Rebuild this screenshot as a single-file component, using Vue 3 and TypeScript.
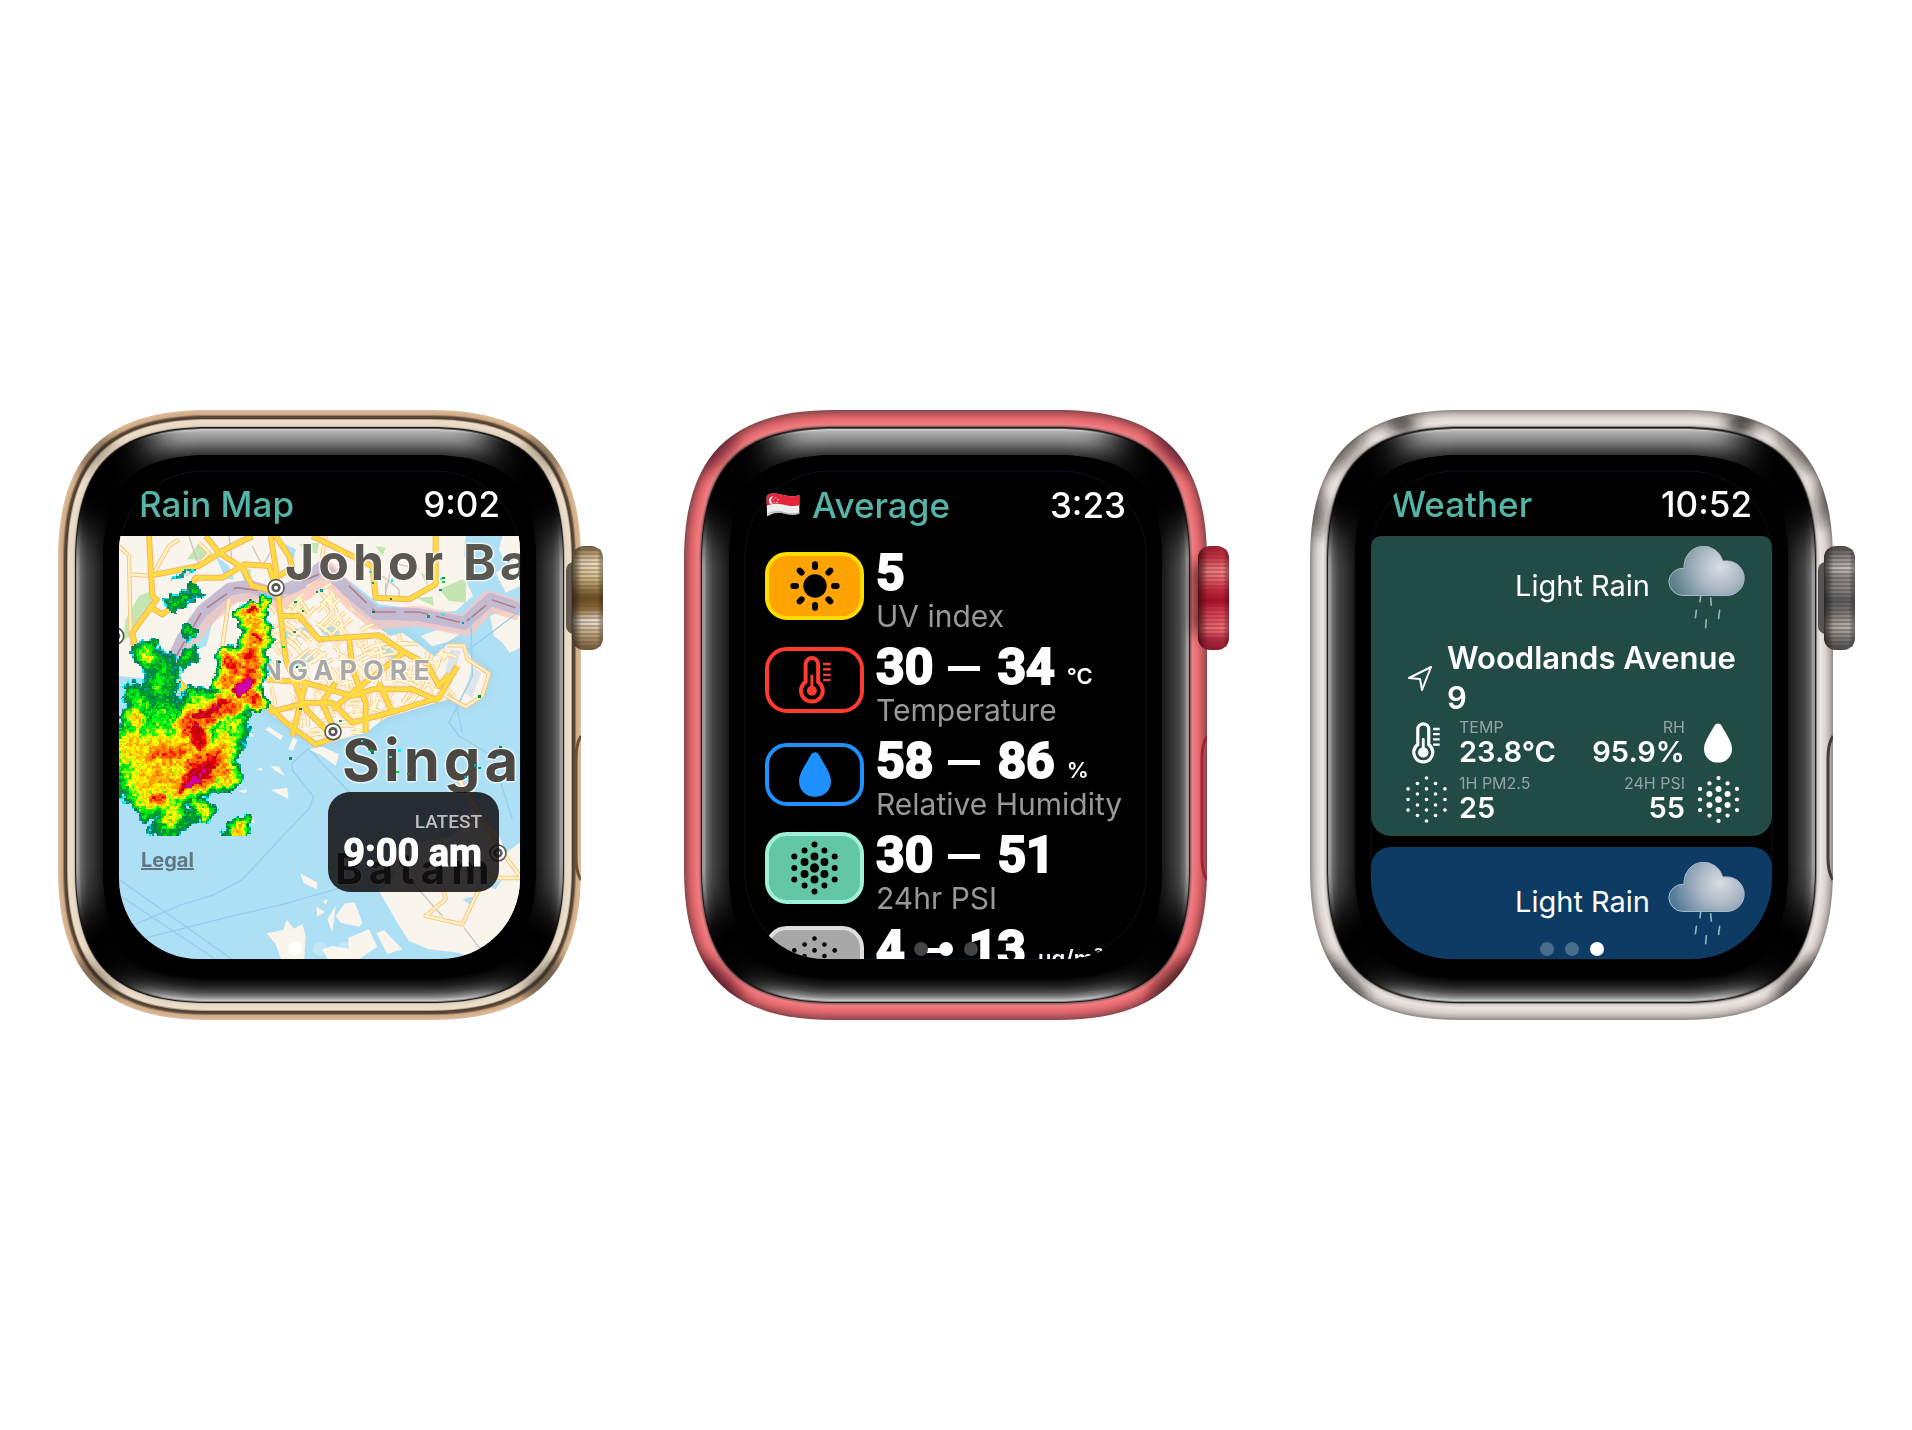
<script setup lang="ts">
type Stop = [number, string]
type Point = [number, number]

interface Finish {
  frame: Stop[]
  crown: Stop[]
  groove: string
  shade: string
}
interface Watch {
  id: string
  title: string
  time: string
  page: number
  finish: Finish
}

const watches: Watch[] = [
  {
    id: 'map', title: 'Rain Map', time: '9:02', page: 0,
    finish: {
      frame: [[0, '#dcbc9a'], [4, '#cfa983'], [6, '#5c4838'], [8, '#4c3f35'], [9, '#b5a592'], [10, '#efe0cb'], [15, '#e6d7c2'], [17, '#a5988a']],
      crown: [[0, '#6f5638'], [8, '#c0a67c'], [16, '#efe0c2'], [30, '#d8c391'], [42, '#93764a'], [50, '#6a4a1a'], [60, '#8f6d3a'], [72, '#efe6dc'], [84, '#c7ab88'], [94, '#8f744f'], [100, '#6f5638']],
      groove: '#6b5233', shade: '#2a2118',
    },
  },
  {
    id: 'average', title: 'Average', time: '3:23', page: 1,
    finish: {
      frame: [[0, '#8e484c'], [3, '#b4555a'], [7, '#dc656a'], [11, '#ee7277'], [14, '#ea8083'], [16, '#a35c60'], [17, '#6a4346']],
      crown: [[0, '#9c2335'], [10, '#c03345'], [24, '#ec8a88'], [32, '#e4666c'], [42, '#c42c42'], [53, '#a80d25'], [62, '#cf3b4f'], [80, '#ee7378'], [90, '#b02a3f'], [100, '#8e1a2e']],
      groove: '#a51f35', shade: '#3a0a12',
    },
  },
  {
    id: 'weather', title: 'Weather', time: '10:52', page: 2,
    finish: {
      frame: [[0, '#968e8b'], [3, '#bcb3b0'], [7, '#dcd3cf'], [12, '#ede5e2'], [15, '#d5ccc9'], [16, '#8d8886'], [17, '#5d5a59']],
      crown: [[0, '#4b4846'], [10, '#8c8785'], [22, '#c9c4c0'], [30, '#8f8a87'], [42, '#8b8683'], [52, '#5c5d60'], [62, '#78716e'], [78, '#bdb6b1'], [90, '#7b7571'], [100, '#4b4846']],
      groove: '#3f3c3b', shade: '#1b1a1a',
    },
  },
]

const readings = [
  { id: 'uv', low: '5', high: '', unit: '', label: 'UV index' },
  { id: 'temp', low: '30', high: '34', unit: '℃', label: 'Temperature' },
  { id: 'rh', low: '58', high: '86', unit: '%', label: 'Relative Humidity' },
  { id: 'psi', low: '30', high: '51', unit: '', label: '24hr PSI' },
  { id: 'pm', low: '4', high: '13', unit: 'µg/m³', label: '1hr PM2.5' },
]

/* ---- watch case ---- */
const CASE_W = 523
const CASE_H = 610

function squircle(inset: number, radius: number, handle: number): string {
  const l = inset
  const t = inset
  const r = CASE_W - inset
  const b = CASE_H - inset
  return `M${l} ${t + radius}C${l} ${t + handle} ${l + handle} ${t} ${l + radius} ${t}H${r - radius}` +
    `C${r - handle} ${t} ${r} ${t + handle} ${r} ${t + radius}V${b - radius}` +
    `C${r} ${b - handle} ${r - handle} ${b} ${r - radius} ${b}H${l + radius}` +
    `C${l + handle} ${b} ${l} ${b - handle} ${l} ${b - radius}Z`
}
function mix(stops: Stop[], at: number): string {
  let k = 0
  while (k < stops.length - 2 && at > stops[k + 1][0]) k++
  const [p0, c0] = stops[k]
  const [p1, c1] = stops[k + 1]
  const f = Math.min(1, Math.max(0, (at - p0) / (p1 - p0)))
  const channel = (i: number) => {
    const a = parseInt(c0.slice(i, i + 2), 16)
    const b = parseInt(c1.slice(i, i + 2), 16)
    return Math.round(a + (b - a) * f)
  }
  return `rgb(${channel(1)},${channel(3)},${channel(5)})`
}
const casePath = (i: number) => squircle(i, 150 - i * 0.88, 46 - i * 0.47)
const glassPath = (j: number) => squircle(17 + j, 135 - j * 0.9, 38 - j * 0.3)

function rings(stops: Stop[], count: number, path: (i: number) => string) {
  return Array.from({ length: count }, (_, i) => ({ d: path(i), fill: mix(stops, i) }))
}
const topGlow = rings([[0, '#555555'], [1, '#d0d0d0'], [3, '#b0b0b0'], [12, '#888888'], [20, '#565656'], [27, '#303030']], 27, j => glassPath(j + 1))
const sideGlow = rings([[0, '#9a9a9a'], [2, '#999999'], [4, '#6c6c6c'], [10, '#454545'], [17, '#323232'], [27, '#151515']], 27, j => glassPath(j + 1))
const lowGlow = rings([[0, '#8a8a8a'], [1, '#c4c4c4'], [4, '#8c8c8c'], [9, '#4c4c4c'], [15, '#222222'], [24, '#000000'], [27, '#000000']], 27, j => glassPath(j + 1))
const core = glassPath(28)
const ridges = Array.from({ length: 25 }, (_, i) => 140 + i * 4)

/* ---- particle icon ---- */
const particles = [
  [0, -71, 0], [0, -35, 1], [0, 0, 2], [0, 35, 1], [0, 71, 0],
  [-30, -53, 0], [-30, -18, 1], [-30, 18, 1], [-30, 53, 0],
  [30, -53, 0], [30, -18, 1], [30, 18, 1], [30, 53, 0],
  [-61, -35, 0], [-61, 0, 0], [-61, 35, 0],
  [61, -35, 0], [61, 0, 0], [61, 35, 0],
]
const boldDots = [9, 12, 14]
const mediumDots = [7, 10, 11]
const greyDots = [7, 7, 7]
const lightDots = [6, 6, 6]

/* ---- map ---- */
function seeded(seed: number): () => number {
  let s = seed
  return () => {
    s = (s * 1664525 + 1013904223) % 4294967296
    return s / 4294967296
  }
}
const singapore = 'M330 205L400 185 470 185 520 170 590 135 640 130 700 215 760 262 815 300 850 290 900 325 945 362 985 325 1035 328 1060 370 1115 412 1090 480 1040 512 990 490 960 498 800 545 740 590 665 610 620 625 560 600 470 545 440 515 360 520 350 610 300 600 230 540 160 440 200 400 250 300Z'
const islands = [
  'M0 0H1040L1035 60 1060 100 1040 130 1062 180 1010 225 960 228 780 205 700 140 620 90 540 150 470 160 400 140 350 150 260 200 190 300 160 400 100 430 0 420Z',
  'M1150 0H1203V60L1160 80 1140 40Z',
  'M1130 110L1203 60V150L1160 170Z',
  'M1113 240L1150 225 1203 240V335L1172 350 1150 320 1125 300Z',
  'M905 300L960 280 1030 290 985 318 940 330Z',
  'M778 1062L818 1042 830 1010 800 990 850 930 1000 900 1060 820 1110 860 1140 900 1160 950 1203 920V1269H1060L1020 1250 930 1240 870 1215 835 1160Z',
  'M650 1140L678 1102 715 1098 738 1150 722 1172 665 1160Z',
  'M688 1205L750 1180 775 1232 720 1269H690Z',
  'M772 1192L795 1182 850 1240 805 1254Z',
  'M640 1230L700 1240 700 1269H660Z',
  'M443 1192L493 1182 503 1152 525 1178 550 1164 560 1200 556 1269H486L470 1225Z',
  'M543 1012L595 1040 594 1060 555 1042Z',
  'M592 1112L618 1128 594 1142Z',
  'M610 1096L625 1090 622 1106Z',
  'M640 1230L610 1240 625 1269H665Z',
  'M650 1110L640 1190 625 1150Z',
  'M340 560L365 555 405 600 370 610 345 640 360 590Z',
  'M438 580L450 573 492 600 485 612Z',
  'M508 640L522 605 536 612 520 645Z',
  'M570 640L610 632 660 655 650 690 610 660Z',
  'M455 762L505 755 508 788 480 775Z',
  'M455 690L480 692 498 720 470 705Z',
  'M412 700L430 695 428 705Z',
  'M355 765L385 760 380 772Z',
  'M400 845L408 862 395 860Z',
]
const lagoons = [
  'M480 290L560 272 570 290 520 312 482 318Z',
  'M515 375L575 350 585 370 530 400Z',
  'M290 60L330 90 345 130 320 130Z',
  'M215 250L270 270 285 240 262 330 235 340Z',
  'M600 275L660 270 660 300 615 298Z',
  'M490 20L530 40 525 70 500 50Z',
  'M740 360L800 330 860 370 830 375 780 350Z',
  'M1030 1090L1070 1080 1060 1110Z',
  'M1100 1050L1150 1030 1130 1060Z',
  'M700 1080L740 1120 770 1180 730 1160Z',
]
const parks = [
  'M205 70L240 20 285 60 250 72Z',
  'M20 250L60 180 105 160 100 200 40 290 10 320Z',
  'M960 160L1030 130 1042 140 1040 200 990 195Z',
  'M890 185L940 182 945 210Z',
  'M360 95L395 100 395 140 375 135Z',
  'M770 30L800 35 790 60Z',
  'M540 25L600 20 595 52 560 45Z',
  'M905 110L930 120 925 150Z',
]
const highways = [
  'M90 0L100 180 113 190 40 290 50 340 200 470 250 540',
  'M98 118L240 90 320 40 400 0',
  'M260 0L300 50 370 95 400 150 470 165',
  'M370 85L450 90 470 150',
  'M195 190L230 125 310 125 370 90',
  'M300 50L400 0',
  'M455 0L470 95 478 180 500 370 560 520 640 600',
  'M470 0L510 60 520 95 480 120',
  'M580 0L760 90 770 185 870 190 950 145 950 0',
  'M90 210L130 235 150 220',
  'M480 240H540L600 310 780 298 850 345 925 385 960 450 990 415',
  'M440 430L560 440 700 480 760 460 880 460 960 495',
  'M450 530L560 500 640 500 700 560 830 525 960 485 1015 390',
  'M420 480L500 560 590 625 660 600',
  'M690 300L700 400 740 500 740 590',
  'M560 440L520 600M650 440L610 500 650 590',
  'M780 440L820 530M860 345L700 470 640 520',
  'M165 420L210 470',
]
const lanes = [
  'M0 30L30 60 35 300 50 360 110 400M105 110L150 30 180 10',
  'M330 190L320 260 310 330 300 400 280 430',
  'M30 115L100 120M240 20L270 50 240 85M620 0L610 60 640 130',
  'M985 328L1035 328 1045 370 1110 412 1090 480 1040 512 980 480',
  'M1020 730L1060 800 1100 860 1150 950 1203 1020M1100 1010L1080 1060 1030 1165 920 1140 980 1090 970 1050 940 1000',
  'M1040 940L1080 1000 1130 1026H1203',
]
const byways = ['M210 0L240 90 200 120M400 30L430 90 460 40M330 0L340 80M900 100L820 80 800 170', 'M880 1040L970 1140M1035 1175L1085 1240', 'M790 120L840 160 840 190M800 140V180']
const ferries = [
  'M0 1030L338 1269M0 1077L288 1269',
  'M43 1167L190 1105 283 1077 368 1032 573 814 583 782 520 702V682L568 637 720 800 800 860',
  'M73 1207L333 1142 503 1102 700 1045',
  'M1055 240L1060 420 990 560 1020 600 1120 660 1180 850',
  'M1010 500L1030 590M1203 225L1050 340',
]
const streets = (() => {
  const next = seeded(77)
  let d = ''
  for (let i = 0; i < 330; i++) {
    const x = 450 + next() * 530
    const y = 140 + next() * 470
    const turn = 0.5 * Math.sin(x / 120) + 0.4 * Math.cos(y / 90) + (next() > 0.5 ? 1.57 : 0)
    const len = 20 + next() * 38
    const dx = Math.cos(turn) * len
    const dy = Math.sin(turn) * len
    d += `M${x.toFixed(0)} ${y.toFixed(0)}q${(dx / 2 + 6).toFixed(0)} ${(dy / 2 - 5).toFixed(0)} ${dx.toFixed(0)} ${dy.toFixed(0)}`
  }
  return d
})()
const pins: Point[] = [[471, 155], [642, 587], [-10, 300], [1137, 951]]

/* ---- rain radar ---- */
// Each cell group: centre x, centre y, half length, half width, tilt in degrees, peak intensity.
const storms = [
  [172, 192, 52, 30, -10, 0.34], [222, 165, 26, 24, -40, 0.3], [190, 112, 34, 10, -15, 0.12],
  [203, 290, 32, 26, 60, 0.32], [205, 365, 52, 26, -35, 0.36], [160, 355, 14, 16, 0, 0.2],
  [82, 352, 44, 52, -20, 0.5], [90, 365, 20, 24, 0, 0.6], [125, 430, 60, 95, 0, 0.36], [120, 455, 30, 36, 0, 0.46],
  [55, 500, 50, 70, 0, 0.42], [50, 545, 50, 48, 0, 0.64], [130, 560, 110, 100, 0, 0.42], [110, 600, 130, 70, 0, 0.48],
  [432, 200, 20, 34, 0, 0.64], [396, 226, 56, 30, 0, 0.78], [398, 224, 28, 12, 0, 1.04],
  [405, 262, 52, 46, 0, 0.72], [404, 308, 56, 50, 0, 0.78], [408, 305, 36, 20, 0, 0.98],
  [392, 360, 58, 56, 0, 0.84], [388, 362, 34, 26, 0, 0.97], [335, 382, 48, 60, 0, 0.88],
  [325, 435, 52, 60, 0, 0.74], [385, 430, 56, 110, 0, 0.84], [376, 450, 48, 32, -30, 1.32], [398, 490, 46, 44, 0, 0.86],
  [250, 495, 75, 50, 0, 0.5], [290, 522, 140, 56, -24, 0.86], [270, 520, 120, 24, -26, 1.04], [220, 570, 75, 90, 0, 0.84],
  [240, 575, 50, 30, 60, 1.0], [340, 560, 60, 70, 0, 0.5],
  [60, 640, 130, 90, 0, 0.66], [150, 650, 190, 90, -8, 0.72], [150, 650, 130, 36, -8, 0.84], [120, 725, 160, 90, 0, 0.68],
  [310, 640, 56, 100, 0, 0.66], [230, 605, 46, 60, 0, 1.0], [245, 700, 160, 72, -42, 0.9], [240, 705, 145, 34, -42, 1.06], [215, 740, 58, 24, -32, 1.3],
  [120, 790, 50, 30, 0, 0.86], [310, 710, 56, 70, 0, 0.72], [110, 790, 100, 50, 0, 0.66], [150, 830, 52, 70, 10, 0.56], [140, 875, 54, 40, 0, 0.34],
  [80, 820, 40, 34, 0, 0.4], [245, 815, 44, 40, 20, 0.52], [250, 840, 16, 18, 0, 0.64], [200, 850, 60, 30, -30, 0.3],
  [360, 875, 38, 44, 20, 0.66], [365, 860, 12, 14, 0, 0.88], [330, 905, 30, 26, 0, 0.3],
]
const scale = ['#00f4f4', '#0c9a9a', '#05824c', '#00a028', '#00d81a', '#08ff10', '#a8fb00', '#ffff00', '#ffcf00', '#ff9a00', '#ff6a00', '#ff2400', '#e60000', '#be0010', '#d000a8']
const limits = [0.05, 0.09, 0.15, 0.24, 0.33, 0.41, 0.47, 0.53, 0.61, 0.68, 0.76, 0.83, 0.89, 0.96, 1.08]
const radar = (() => {
  const next = seeded(2024)
  const paths = scale.map(() => '')
  const cell = 5
  let coarse: number[] = []
  for (let y = 100; y < 900; y += cell) {
    if ((y / cell) % 2 === 0) coarse = Array.from({ length: 60 }, () => next() - 0.5)
    for (let x = 0; x < 470; x += cell) {
      const wx = x + 6 * Math.sin(y / 17) + 4 * Math.sin(y / 7 + x / 11)
      const wy = y + 7 * Math.sin(x / 15) + 4 * Math.cos(x / 6 - y / 13)
      let v = 0
      for (const [cx, cy, a, b, tilt, peak] of storms) {
        const t = (tilt * Math.PI) / 180
        const dx = wx - cx
        const dy = wy - cy
        const u = (dx * Math.cos(t) + dy * Math.sin(t)) / a
        const w = (dy * Math.cos(t) - dx * Math.sin(t)) / b
        v = Math.max(v, peak * (1 - Math.pow(u * u + w * w, 1.3)))
      }
      if (v <= 0) continue
      v += (next() - 0.5) * 0.12 + coarse[Math.floor(x / 10)] * 0.15
      let k = -1
      while (k < limits.length - 1 && v > limits[k + 1]) k++
      if (k >= 0) paths[k] += `M${x} ${y}h5v5h-5z`
    }
  }
  for (const [x, y, k] of [[525, 195, 3], [548, 222, 3], [590, 165, 3], [603, 160, 1], [522, 285, 1], [490, 330, 4], [478, 375, 2], [530, 390, 2], [540, 515, 2], [970, 122, 3], [970, 135, 4], [962, 126, 0], [960, 158, 1], [815, 130, 0], [750, 105, 0], [758, 138, 1], [925, 238, 1], [968, 232, 0], [1028, 258, 1], [812, 185, 2], [760, 225, 2], [1078, 478, 3], [660, 552, 1], [752, 640, 3], [757, 646, 2], [725, 612, 0], [832, 705, 4], [865, 710, 3], [838, 640, 0], [1140, 630, 3], [1130, 650, 2], [1065, 685, 1], [1078, 692, 1], [1035, 720, 1], [510, 664, 3], [810, 660, 0]]) {
    paths[k] += `M${x} ${y}h8v7h-8z`
  }
  return paths
})()
</script>

<template>
  <main class="stage">
    <section v-for="w in watches" :key="w.id" class="watch" :aria-label="w.title">
      <svg class="shell" viewBox="-1 0 546 610" aria-hidden="true">
        <defs>
          <filter :id="`soft-${w.id}`" x="-20%" y="-60%" width="140%" height="220%"><feGaussianBlur stdDeviation="18" /></filter>
          <filter :id="`haze-${w.id}`" x="-100%" y="-100%" width="300%" height="300%"><feGaussianBlur stdDeviation="7" /></filter>
          <mask :id="`top-${w.id}`" maskUnits="userSpaceOnUse" x="0" y="0" width="523" height="610">
            <rect x="96" y="-60" width="331" height="180" fill="#fff" :filter="`url(#soft-${w.id})`" />
          </mask>
          <mask :id="`side-${w.id}`" maskUnits="userSpaceOnUse" x="0" y="0" width="523" height="610">
            <rect x="-60" y="125" width="643" height="370" fill="#fff" :filter="`url(#soft-${w.id})`" />
          </mask>
          <mask :id="`low-${w.id}`" maskUnits="userSpaceOnUse" x="0" y="0" width="523" height="610">
            <rect x="84" y="500" width="355" height="180" fill="#fff" :filter="`url(#soft-${w.id})`" />
          </mask>
          <linearGradient :id="`crown-${w.id}`" x1="0" y1="0" x2="0" y2="1">
            <stop v-for="s in w.finish.crown" :key="s[0]" :offset="`${s[0]}%`" :stop-color="s[1]" />
          </linearGradient>
          <linearGradient :id="`edge-${w.id}`">
            <stop offset="0" :stop-color="w.finish.shade" stop-opacity=".85" />
            <stop offset=".3" :stop-color="w.finish.shade" stop-opacity=".1" />
            <stop offset=".8" :stop-color="w.finish.shade" stop-opacity="0" />
            <stop offset="1" :stop-color="w.finish.shade" stop-opacity=".5" />
          </linearGradient>
          <clipPath :id="`case-${w.id}`"><path :d="casePath(0)" /></clipPath>
        </defs>

        <path v-for="(r, i) in rings(w.finish.frame, 17, casePath)" :key="`f${i}`" :d="r.d" :fill="r.fill" />
        <g :clip-path="`url(#case-${w.id})`">
          <g :filter="`url(#haze-${w.id})`" :fill="w.finish.shade">
            <ellipse cx="36" cy="42" rx="26" ry="8" transform="rotate(-45 36 42)" opacity=".5" />
            <ellipse cx="487" cy="42" rx="26" ry="8" transform="rotate(45 487 42)" opacity=".5" />
            <ellipse cx="36" cy="570" rx="30" ry="9" transform="rotate(45 36 570)" opacity=".6" />
            <ellipse cx="487" cy="570" rx="30" ry="9" transform="rotate(-45 487 570)" opacity=".7" />
            <template v-if="w.id === 'weather'">
              <ellipse cx="8" cy="105" rx="9" ry="22" opacity=".5" />
              <ellipse cx="515" cy="95" rx="9" ry="22" opacity=".5" />
              <ellipse cx="92" cy="14" rx="15" ry="9" opacity=".8" />
              <ellipse cx="431" cy="14" rx="15" ry="9" opacity=".9" />
            </template>
          </g>
          <path d="M523 326q-5 8-5 22v100q0 14 5 22" fill="none" :stroke="w.finish.groove" stroke-width="3" />
        </g>

        <path :d="glassPath(0)" fill="#1c1c1c" />
        <path :d="glassPath(1)" fill="#000" />
        <g :mask="`url(#side-${w.id})`">
          <path v-for="(r, i) in sideGlow" :key="`s${i}`" :d="r.d" :fill="r.fill" />
          <path :d="core" fill="#000" />
        </g>
        <g :mask="`url(#top-${w.id})`">
          <path v-for="(r, i) in topGlow" :key="`t${i}`" :d="r.d" :fill="r.fill" />
          <path :d="core" fill="#000" />
        </g>
        <g :mask="`url(#low-${w.id})`">
          <path v-for="(r, i) in lowGlow" :key="`l${i}`" :d="r.d" :fill="r.fill" />
          <path :d="core" fill="#000" />
        </g>
        <path :d="core" fill="#000" />
        <rect x="61" y="61" width="401" height="488" rx="84" fill="none" stroke="#0b1220" />

        <rect x="508" y="152" width="16" height="72" rx="8" :fill="w.finish.shade" opacity=".7" :filter="w.id === 'average' ? `url(#haze-${w.id})` : undefined" />
        <rect x="514" y="136" width="31" height="104" rx="12" :fill="`url(#crown-${w.id})`" />
        <path v-for="y in ridges" :key="`r${y}`" :d="`M517 ${y}H543`" :stroke="w.finish.groove" stroke-opacity=".7" />
        <rect x="514" y="136" width="31" height="104" rx="12" :fill="`url(#edge-${w.id})`" />
      </svg>

      <div class="screen">
        <header class="bar" :class="{ low: w.id === 'average' }">
          <svg v-if="w.id === 'average'" class="flag" viewBox="0 0 102 72" role="img" aria-label="Singapore">
            <path d="M2 6C22-2 40 3 56 7s30 4 44 0V62c-16 6-30 3-46-1S22 58 3 70Z" fill="#ededed" />
            <path d="M2 6C22-2 40 3 56 7s30 4 44 0V37c-16 4-30 2-46-2S22 32 2 38Z" fill="#e3263a" />
            <path d="M23 11a12 12 0 1 0 2 23a12 12 0 0 1-2-23Z" fill="#fff" />
            <g fill="#fff"><circle cx="29" cy="14" r="2" /><circle cx="22" cy="20" r="2" /><circle cx="36" cy="20" r="2" /><circle cx="25" cy="28" r="2" /><circle cx="33" cy="28" r="2" /></g>
            <path d="M3 66C22 56 38 58 54 62s30 5 46 0V58c-16 5-30 3-46-1S22 52 3 62Z" fill="#b5b5b5" />
          </svg>
          <h1 class="title">{{ w.title }}</h1>
          <time class="clock">{{ w.time }}</time>
        </header>

        <div v-if="w.id === 'map'" class="map">
          <svg class="layer" viewBox="0 0 1203 1269" preserveAspectRatio="xMidYMid slice" aria-hidden="true">
            <defs>
              <clipPath id="island"><path :d="singapore" /></clipPath>
              <filter id="shoal" x="-10%" y="-10%" width="120%" height="120%"><feGaussianBlur stdDeviation="14" /></filter>
            </defs>
            <rect width="1203" height="1269" fill="#aee0f5" />
            <path :d="singapore" fill="#a3d7ee" stroke="#a3d7ee" stroke-width="26" filter="url(#shoal)" />
            <g fill="#f9f4ec">
              <path v-for="d in islands" :key="d" :d="d" />
              <path :d="singapore" />
            </g>
            <path v-for="d in parks" :key="d" :d="d" fill="#c3e6b2" />
            <path v-for="d in lagoons" :key="d" :d="d" fill="#aee0f5" />
            <path d="M965 470L995 340 1025 345 1000 440ZM1035 470L1060 390 1085 410 1060 485Z" fill="#dde4ea" />
            <g fill="none" stroke-linejoin="round">
              <path d="M155 410L200 320 260 240 340 170 390 165 470 195 560 160 620 105 700 190 770 250 900 240 1040 270 1110 195 1203 225" stroke="#fbc4bb" stroke-opacity=".75" stroke-width="62" />
              <path d="M155 390L190 310 250 225 330 160 390 150 470 175 550 140 610 92 690 165 770 232 900 236 1035 262 1115 190 1203 220" stroke="#c0b9d4" stroke-opacity=".9" stroke-width="38" />
              <path d="M160 380L250 225 350 155 430 165M550 135L600 115M690 150L770 228 900 228 1035 262 1120 192 1203 220" stroke="#b17f86" stroke-width="5" stroke-dasharray="74 24" />
              <path v-for="d in ferries" :key="d" :d="d" stroke="#93cdf0" stroke-width="4" />
              <path v-for="d in byways" :key="d" :d="d" stroke="#c9c5bf" stroke-width="4" />
              <g clip-path="url(#island)">
                <path :d="streets" stroke="#f6c690" stroke-width="12" />
                <path :d="streets" stroke="#fff8cf" stroke-width="7" />
              </g>
              <path v-for="d in lanes" :key="d" :d="d" stroke="#f8c58c" stroke-width="13" />
              <path v-for="d in lanes" :key="`${d}i`" :d="d" stroke="#fff3c4" stroke-width="7" />
              <path v-for="d in highways" :key="d" :d="d" stroke="#f6b268" stroke-width="18" />
              <path v-for="d in highways" :key="`${d}i`" :d="d" stroke="#ffdc3e" stroke-width="12" />
            </g>
            <g v-for="p in pins" :key="p[0]" :transform="`translate(${p[0]} ${p[1]})`">
              <circle r="24" fill="#fff" stroke="#5b5851" stroke-width="5" />
              <circle r="10" fill="#fff" stroke="#5b5851" stroke-width="8" />
            </g>
          </svg>
          <span class="place johor">Johor Bahru</span>
          <span class="place country">SINGAPORE</span>
          <span class="place city">Singapore</span>
          <span class="place batam">Batam</span>
          <svg class="layer" viewBox="0 0 1203 1269" preserveAspectRatio="xMidYMid slice" shape-rendering="crispEdges" aria-hidden="true">
            <path v-for="(d, i) in radar" :key="i" :d="d" :fill="scale[i]" />
          </svg>
          <a class="legal" href="#legal">Legal</a>
          <div class="latest">
            <span class="caption">LATEST</span>
            <strong class="when">9:00 am</strong>
          </div>
        </div>

        <ul v-else-if="w.id === 'average'" class="readings">
          <li v-for="r in readings" :key="r.id" class="reading">
            <span class="badge" :class="r.id">
              <svg v-if="r.id === 'uv'" class="sun" viewBox="-75 -75 150 150" aria-hidden="true">
                <circle r="35" />
                <path v-for="a in 8" :key="a" d="M0-65V-57" stroke="#000" stroke-width="18" stroke-linecap="round" :transform="`rotate(${a * 45})`" />
              </svg>
              <svg v-else-if="r.id === 'temp'" class="thermo" viewBox="0 0 97 145" aria-hidden="true">
                <path d="M20 78V25A19 19 0 0 1 58 25V78A33 33 0 1 1 20 78Z" fill="none" stroke="currentColor" stroke-width="12" />
                <path d="M39 60V105" stroke="currentColor" stroke-width="9" stroke-linecap="round" />
                <circle cx="39" cy="105" r="15" fill="currentColor" />
                <path d="M73 24H96M73 40H96M73 57H96M73 73H96" stroke="currentColor" stroke-width="7" />
              </svg>
              <svg v-else-if="r.id === 'rh'" class="drop" viewBox="0 0 96 134" aria-hidden="true">
                <path d="M48 0C54 0 58 4 61 9C75 36 96 62 96 88C96 114 75 134 48 134C21 134 0 114 0 88C0 62 21 36 35 9C38 4 42 0 48 0Z" fill="currentColor" />
              </svg>
              <svg v-else class="cloud-dots" viewBox="-71 -81 142 162" aria-hidden="true">
                <circle v-for="(p, i) in particles" :key="i" :cx="p[0]" :cy="p[1]" :r="(r.id === 'psi' ? boldDots : greyDots)[p[2]]" />
              </svg>
            </span>
            <div class="figures">
              <div class="value">
                <span>{{ r.low }}</span>
                <template v-if="r.high"><i class="dash" role="img" aria-label="to"></i><span>{{ r.high }}</span></template>
                <small v-if="r.unit" class="unit">{{ r.unit }}</small>
              </div>
              <div class="label">{{ r.label }}</div>
            </div>
          </li>
        </ul>

        <div v-else class="cards">
          <article v-for="c in ['green', 'blue']" :key="c" class="card" :class="c">
            <div class="sky">
              <span>Light Rain</span>
              <svg class="cloud" viewBox="268 433 231 253" aria-hidden="true">
                <defs>
                  <radialGradient :id="`puff-${c}`" gradientUnits="userSpaceOnUse" cx="425" cy="500" r="150">
                    <stop offset="0" stop-color="#dadde3" />
                    <stop offset=".45" stop-color="#a9b6c4" />
                    <stop offset="1" :stop-color="c === 'green' ? '#5d7f88' : '#527a99'" />
                  </radialGradient>
                </defs>
                <path d="M311 585A43 43 0 0 1 270 543A43 41 0 0 1 316 503V493A59 59 0 0 1 432 481H445A52 52 0 0 1 445 585Z" :fill="`url(#puff-${c})`" stroke="#a9bbc6" stroke-width="3" />
                <path d="M366 586l-2 18M396 592l2 22M353 630l-3 22M423 630l-3 24M383 658l-2 24" stroke="#8fb4bd" stroke-width="5" stroke-linecap="round" />
              </svg>
            </div>
            <template v-if="c === 'green'">
              <div class="site">
                <svg class="arrow" viewBox="0 0 24 25" aria-hidden="true"><path d="M23 1L1 12L12 13L14 24Z" fill="none" stroke="#fff" stroke-width="2" stroke-linejoin="round" /></svg>
                <h2>Woodlands Avenue 9</h2>
              </div>
              <dl class="metrics">
                <svg class="thermo small" viewBox="0 0 97 145" aria-hidden="true">
                  <path d="M20 78V25A19 19 0 0 1 58 25V78A33 33 0 1 1 20 78Z" fill="none" stroke="currentColor" stroke-width="11" />
                  <path d="M39 60V105" stroke="currentColor" stroke-width="10" stroke-linecap="round" />
                  <circle cx="39" cy="105" r="18" fill="currentColor" />
                  <path d="M73 24H96M73 42H96M73 60H96M73 78H96" stroke="currentColor" stroke-width="8" />
                </svg>
                <div><dt>TEMP</dt><dd>23.8°C</dd></div>
                <div class="end"><dt>RH</dt><dd>95.9%</dd></div>
                <svg class="drop small" viewBox="0 0 96 134" aria-hidden="true">
                  <path d="M48 0C54 0 58 4 61 9C75 36 96 62 96 88C96 114 75 134 48 134C21 134 0 114 0 88C0 62 21 36 35 9C38 4 42 0 48 0Z" fill="currentColor" />
                </svg>
                <svg class="cloud-dots small" viewBox="-71 -81 142 162" aria-hidden="true">
                  <circle v-for="(p, i) in particles" :key="i" :cx="p[0]" :cy="p[1]" :r="lightDots[p[2]]" fill="currentColor" />
                </svg>
                <div><dt>1H PM2.5</dt><dd>25</dd></div>
                <div class="end"><dt>24H PSI</dt><dd>55</dd></div>
                <svg class="cloud-dots small" viewBox="-71 -81 142 162" aria-hidden="true">
                  <circle v-for="(p, i) in particles" :key="i" :cx="p[0]" :cy="p[1]" :r="mediumDots[p[2]]" fill="currentColor" />
                </svg>
              </dl>
            </template>
          </article>
        </div>

        <div class="pager" :class="w.id" aria-hidden="true">
          <i v-for="n in 3" :key="n" :class="{ on: n - 1 === w.page }"></i>
        </div>
      </div>
    </section>
  </main>
</template>

<style>
body {
  margin: 0;
  background: #fff;
}
</style>

<style scoped>
.stage {
  min-height: 100vh;
  display: flex;
  flex-wrap: wrap;
  align-items: center;
  align-content: center;
  justify-content: center;
  gap: 80px;
  font-family: Inter, "Liberation Sans", sans-serif;
  color: #fff;
}
.watch {
  position: relative;
  box-sizing: border-box;
  width: 546px;
  padding: 61px 83px 61px 62px;
}
.shell {
  position: absolute;
  inset: 0;
  width: 100%;
  height: 100%;
}
.screen {
  position: relative;
  display: flex;
  flex-direction: column;
  height: 488px;
  overflow: hidden;
  border-radius: 80px;
}
.bar {
  flex: none;
  box-sizing: border-box;
  height: 65px;
  padding: 0 20px;
  display: flex;
  align-items: center;
  font-size: 35px;
  line-height: 48px;
}
.bar.low {
  height: 68px;
}
.flag {
  width: 34px;
  height: 24px;
  margin: 0 12px 0 1px;
}
.title {
  margin: 0;
  flex: 1;
  font-size: 35px;
  font-weight: 500;
  color: #55b4a5;
}
.clock {
  font-weight: 500;
}

.map {
  position: relative;
  flex: 1;
  overflow: hidden;
}
.layer {
  position: absolute;
  inset: 0;
  width: 100%;
  height: 100%;
}
.place {
  position: absolute;
  white-space: nowrap;
  font-weight: 700;
  color: #5b5851;
  text-shadow: 0 0 3px #fff, 0 0 3px #fff, 0 0 2px #fff, 0 0 2px #fff;
}
.johor {
  left: 166px;
  top: -4px;
  font-size: 50px;
  line-height: 60px;
  letter-spacing: 4px;
}
.country {
  left: 105px;
  top: 120px;
  font-size: 27px;
  line-height: 30px;
  letter-spacing: 6px;
  color: #aaa9a6;
}
.city {
  left: 223px;
  top: 189px;
  font-size: 58px;
  line-height: 70px;
  letter-spacing: 4px;
  color: #4b4742;
}
.batam {
  left: 216px;
  top: 308px;
  font-size: 42px;
  line-height: 50px;
  letter-spacing: 6px;
  color: #2b2a29;
}
.legal {
  position: absolute;
  left: 22px;
  top: 312px;
  font-size: 20px;
  line-height: 24px;
  font-weight: 700;
  color: #5f7780;
}
.latest {
  position: absolute;
  right: 21px;
  bottom: 67px;
  box-sizing: border-box;
  width: 171px;
  height: 100px;
  padding: 18px 17px 0 0;
  border-radius: 22px;
  background: rgba(12, 10, 12, 0.84);
  display: flex;
  flex-direction: column;
  align-items: flex-end;
}
.caption {
  font: 500 19px/24px Roboto, sans-serif;
  color: #bdbdc0;
}
.when {
  font: 700 38px/38px Roboto, sans-serif;
  -webkit-text-stroke: 1px #fff;
}

.readings {
  list-style: none;
  margin: 0;
  padding: 0 0 0 20px;
}
.reading {
  height: 94px;
  display: flex;
  align-items: center;
  gap: 12px;
}
.badge {
  box-sizing: border-box;
  flex: none;
  width: 99px;
  height: 66px;
  border: 4px solid;
  border-radius: 22px;
  display: flex;
  align-items: center;
  justify-content: center;
}
.badge.uv {
  height: 68px;
  background: #ffa300;
  border-color: #ffdc00;
}
.badge.temp {
  color: #ff3b30;
}
.badge.rh {
  height: 63px;
  color: #1e90ff;
}
.badge.psi {
  height: 72px;
  background: #63c7a5;
  border-color: #9ff0d8;
}
.badge.pm {
  height: 72px;
  background: #a8a8a8;
  border-color: #dedede;
}
.sun {
  width: 50px;
  height: 50px;
}
.thermo {
  width: 32px;
  height: 48px;
}
.drop {
  width: 32px;
  height: 45px;
}
.cloud-dots {
  width: 47px;
  height: 54px;
}
.figures {
  padding-top: 8px;
}
.value {
  display: flex;
  align-items: baseline;
  font: 700 50px/52px Roboto, sans-serif;
  -webkit-text-stroke: 2px #fff;
}
.dash {
  align-self: center;
  width: 32px;
  height: 5px;
  margin: 3px 17px 0 15px;
  background: #fff;
}
.unit {
  margin-left: 12px;
  font: 600 22px/24px Inter, "Noto Sans CJK SC", sans-serif;
  -webkit-text-stroke: 0;
}
.label {
  font-size: 30px;
  line-height: 34px;
  white-space: nowrap;
  color: #98989b;
}

.cards {
  flex: 1;
  display: flex;
  flex-direction: column;
  gap: 11px;
}
.card {
  flex: none;
  box-sizing: border-box;
  height: 300px;
  padding: 0 27px 0 28px;
  border-radius: 20px;
}
.card.green {
  padding-top: 9px;
  border-radius: 10px 10px 20px 20px;
  background: #234b45;
}
.card.blue {
  padding-top: 14px;
  background: #0e3b64;
}
.sky {
  display: flex;
  justify-content: flex-end;
  gap: 18px;
  font-size: 29px;
  line-height: 82px;
}
.cloud {
  width: 77px;
  height: 84px;
}
.site {
  display: flex;
  align-items: center;
  height: 74px;
  margin-top: 12px;
}
.arrow {
  flex: none;
  width: 24px;
  height: 25px;
  margin: 0 15px 0 9px;
}
.site h2 {
  margin: 0;
  font-size: 31px;
  line-height: 40px;
  font-weight: 600;
}
.metrics {
  margin: 0;
  display: grid;
  grid-template-columns: 54px 1fr 1fr 54px;
  column-gap: 6px;
  grid-auto-rows: 56px;
  align-items: center;
  justify-items: center;
}
.metrics div {
  justify-self: start;
  white-space: nowrap;
}
.metrics .end {
  justify-self: end;
  text-align: right;
}
.metrics dt {
  font-size: 16px;
  line-height: 18px;
  color: #91a5a2;
}
.metrics dd {
  margin: 0;
  font-size: 29px;
  line-height: 32px;
  font-weight: 600;
}
.thermo.small {
  width: 28px;
  height: 46px;
}
.drop.small {
  width: 28px;
  height: 42px;
}
.cloud-dots.small {
  width: 43px;
  height: 49px;
}

.pager {
  position: absolute;
  left: 0;
  right: 0;
  bottom: 3px;
  display: flex;
  justify-content: center;
  gap: 11px;
}
.pager i {
  width: 14px;
  height: 14px;
  border-radius: 50%;
  background: rgba(255, 255, 255, 0.25);
}
.pager.average i {
  background: #444;
}
.pager .on,
.pager.average .on {
  background: #fff;
}
</style>
